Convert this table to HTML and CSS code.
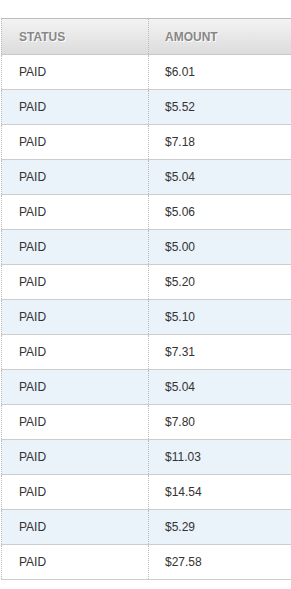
FILE: index.html
```html
<!DOCTYPE html>
<html>
<head>
<meta charset="utf-8">
<link rel="stylesheet" href="styles.css">
</head>
<body>
<div class="table">
  <div class="row head">
    <div class="cell c1">Status</div>
    <div class="cell c2">Amount</div>
  </div>
  <div class="row"><div class="cell c1">PAID</div><div class="cell c2">$6.01</div></div>
  <div class="row alt"><div class="cell c1">PAID</div><div class="cell c2">$5.52</div></div>
  <div class="row"><div class="cell c1">PAID</div><div class="cell c2">$7.18</div></div>
  <div class="row alt"><div class="cell c1">PAID</div><div class="cell c2">$5.04</div></div>
  <div class="row"><div class="cell c1">PAID</div><div class="cell c2">$5.06</div></div>
  <div class="row alt"><div class="cell c1">PAID</div><div class="cell c2">$5.00</div></div>
  <div class="row"><div class="cell c1">PAID</div><div class="cell c2">$5.20</div></div>
  <div class="row alt"><div class="cell c1">PAID</div><div class="cell c2">$5.10</div></div>
  <div class="row"><div class="cell c1">PAID</div><div class="cell c2">$7.31</div></div>
  <div class="row alt"><div class="cell c1">PAID</div><div class="cell c2">$5.04</div></div>
  <div class="row"><div class="cell c1">PAID</div><div class="cell c2">$7.80</div></div>
  <div class="row alt"><div class="cell c1">PAID</div><div class="cell c2">$11.03</div></div>
  <div class="row"><div class="cell c1">PAID</div><div class="cell c2">$14.54</div></div>
  <div class="row alt"><div class="cell c1">PAID</div><div class="cell c2">$5.29</div></div>
  <div class="row"><div class="cell c1">PAID</div><div class="cell c2">$27.58</div></div>
</div>
</body>
</html>
```
FILE: styles.css
```css
html, body {
  margin: 0;
  padding: 0;
  background: #fff;
}
body {
  padding-top: 18px;
  font-family: "Liberation Sans", Arial, sans-serif;
  font-size: 12px;
  color: #333;
}
.table {
  margin-left: 1px;
}
.row {
  display: flex;
  height: 35px;
  box-sizing: border-box;
  border-bottom: 1px solid #cdcdcd;
  background: #fff;
}
.row.alt {
  background: #eaf2fa;
}
.row.head {
  height: 37px;
  border-top: 1px solid #bcbcbc;
  border-bottom: 1px solid #c8c8c8;
  background: linear-gradient(#f3f3f3, #dcdcdc);
}
.cell {
  display: flex;
  align-items: center;
  box-sizing: border-box;
}
.c1 {
  width: 148px;
  border-left: 1px dotted #bbb;
  border-right: 1px dotted #bbb;
  padding-left: 17px;
}
.c2 {
  flex: 1;
  padding-left: 16px;
}
.head .cell {
  font-weight: bold;
  text-transform: uppercase;
  color: #878787;
  text-shadow: 1px 1px 0 #fff;
  padding-top: 1px;
}
```
